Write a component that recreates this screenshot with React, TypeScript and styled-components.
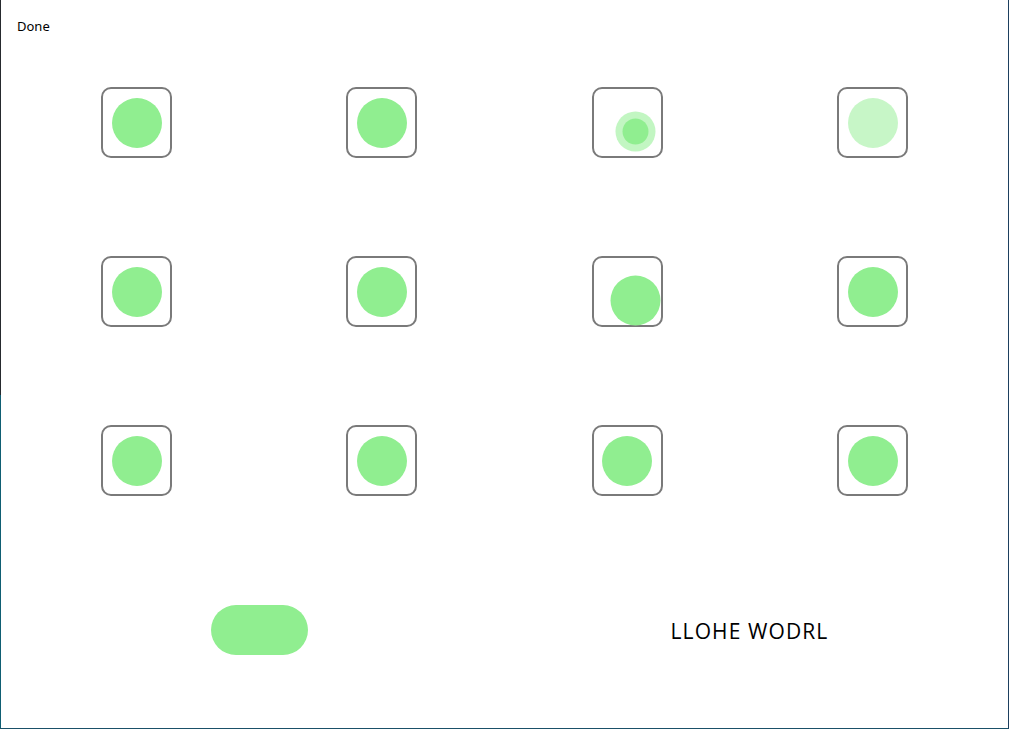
import React from "react";
import styled, { createGlobalStyle, css } from "styled-components";

const Global = createGlobalStyle`
  html, body { margin: 0; padding: 0; background: #fff; }
  body { font-family: "Noto Sans", "Open Sans", sans-serif; }
`;

const Frame = styled.div`
  box-sizing: border-box;
  width: 1009px;
  height: 729px;
  padding-left: 1px;
  border-right: 1px solid #1d3f5e;
  border-bottom: 1px solid #1a5068;
  background: linear-gradient(to bottom, #262a2e 0 395px, #0f5e73 395px) left top / 1px 100% no-repeat, #fff;
  display: flex;
  flex-direction: column;
`;

const Header = styled.div`
  box-sizing: border-box;
  height: 38px;
  padding: 17px 0 0 16px;
  font-size: 13px;
  line-height: 18px;
  color: #000;
`;

const Grid = styled.div`
  margin-left: 13px;
  display: grid;
  grid-template-columns: 245px 245px 246px 245px;
  grid-auto-rows: 169px;
`;

const Cell = styled.div<{ $span?: number }>`
  display: flex;
  align-items: center;
  justify-content: center;
  grid-column: span ${(p) => p.$span ?? 1};
`;

const Box = styled.div`
  box-sizing: border-box;
  width: 71px;
  height: 71px;
  border: 2px solid #7a7a7a;
  border-radius: 10px;
  display: flex;
  align-items: center;
  justify-content: center;
`;

type Variant = "normal" | "offset" | "faded" | "halo";

const Dot = styled.div<{ $variant: Variant }>`
  width: 50px;
  height: 50px;
  border-radius: 50%;
  background: #90ee90;
  ${(p) =>
    p.$variant === "offset" &&
    css`
      transform: translate(8.5px, 8.5px);
    `}
  ${(p) =>
    p.$variant === "faded" &&
    css`
      opacity: 0.5;
    `}
  ${(p) =>
    p.$variant === "halo" &&
    css`
      width: 26px;
      height: 26px;
      box-shadow: 0 0 0 7px rgba(144, 238, 144, 0.55);
      transform: translate(8.5px, 8.5px);
    `}
`;

const Pill = styled.div`
  width: 97px;
  height: 50px;
  border-radius: 25px;
  background: #90ee90;
`;

const Label = styled.div`
  font-family: "Open Sans", "Noto Sans", sans-serif;
  font-size: 21px;
  color: #000;
  letter-spacing: 1.1px;
  margin-top: 2px;
`;

const variants: Variant[] = [
  "normal", "normal", "halo", "faded",
  "normal", "normal", "offset", "normal",
  "normal", "normal", "normal", "normal",
];

export default function App() {
  return (
    <>
      <Global />
      <Frame>
        <Header>Done</Header>
        <Grid>
          {variants.map((v, i) => (
            <Cell key={i}>
              <Box>
                <Dot $variant={v} />
              </Box>
            </Cell>
          ))}
          <Cell $span={2}>
            <Pill />
          </Cell>
          <Cell $span={2}>
            <Label>LLOHE WODRL</Label>
          </Cell>
        </Grid>
      </Frame>
    </>
  );
}
